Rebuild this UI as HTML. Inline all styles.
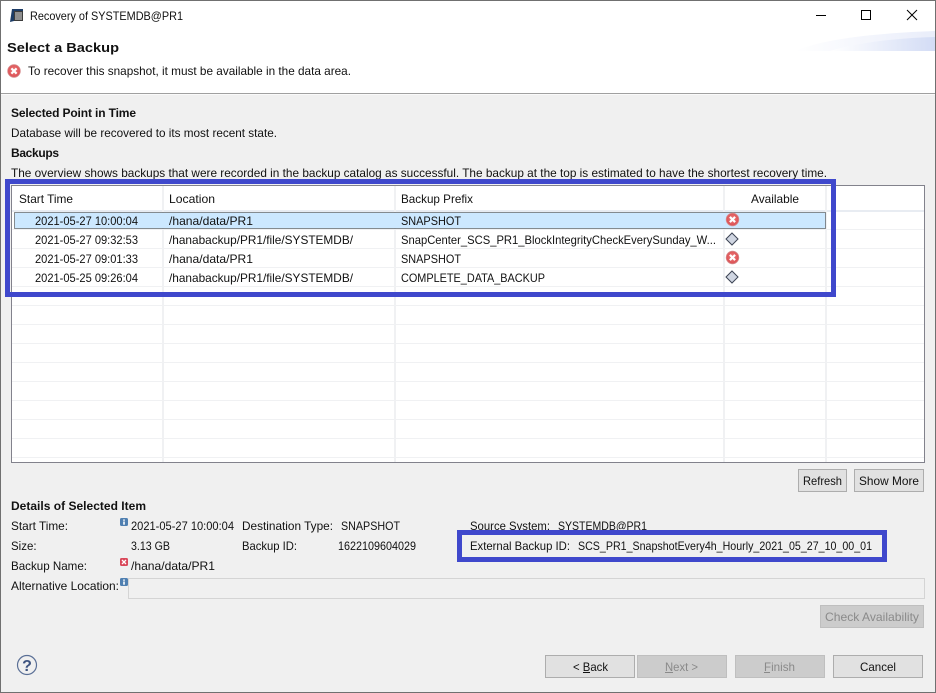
<!DOCTYPE html>
<html><head><meta charset="utf-8"><style>
html,body{margin:0;padding:0;background:#f0f0f0;width:936px;height:693px;overflow:hidden}
svg{display:block}
text{font-family:"Liberation Sans",sans-serif;font-size:12px;fill:#111}
.b{font-weight:bold}
.d{fill:#8a8a8a}
</style></head><body>
<svg width="936" height="693" viewBox="0 0 936 693" xmlns="http://www.w3.org/2000/svg">
<defs>
<linearGradient id="g1" x1="0" x2="1" y1="0" y2="0"><stop offset="0" stop-color="#fff"/><stop offset="1" stop-color="#d3dcf5"/></linearGradient>
<linearGradient id="g2" x1="0" x2="1" y1="0" y2="0"><stop offset="0" stop-color="#fff"/><stop offset="1" stop-color="#e9edfa"/></linearGradient>
<radialGradient id="er" cx=".5" cy=".45" r=".6"><stop offset="0" stop-color="#ee7a7a"/><stop offset="1" stop-color="#d84a4e"/></radialGradient>
<g id="err"><circle r="6.3" fill="url(#er)" stroke="#d6888a" stroke-width=".8"/><path d="M-2.6-2.6L2.6 2.6M2.6-2.6L-2.6 2.6" stroke="#fff" stroke-width="2.2"/></g>
<g id="dia"><path d="M0-6L6 0L0 6L-6 0Z" fill="#d0d6e2" stroke="#3c4454" stroke-width="1"/></g>
<g id="info"><rect x="-4" y="-4" width="8" height="8" rx="1.5" fill="#4f7fb0"/><rect x="-.8" y="-2.6" width="1.6" height="1.4" fill="#fff"/><rect x="-.8" y="-.5" width="1.6" height="3.2" fill="#fff"/></g>
<g id="xs"><rect x="-4" y="-4" width="8" height="8" rx="1.5" fill="#d9485a"/><path d="M-2-2L2 2M2-2L-2 2" stroke="#fff" stroke-width="1.3"/></g>
</defs>

<!-- backgrounds -->
<rect width="936" height="693" fill="#f0f0f0"/>
<rect x="0" y="0" width="936" height="93" fill="#fff"/>
<path d="M795 51C825 38 880 33 935 31V51Z" fill="url(#g2)"/>
<path d="M830 51C860 42 900 38 935 37V51Z" fill="url(#g1)"/>
<rect x="0" y="93" width="936" height="1" fill="#a0a0a0"/>
<rect x="0" y="94" width="936" height="1" fill="#fafafa"/>

<!-- title bar -->
<path d="M10 22L12 9H23V21H14Z" fill="#1d3c66"/>
<rect x="14.5" y="11.5" width="8" height="9" fill="#8f8f8f" stroke="#3c3c3c" stroke-width="1"/>
<text x="30" y="20" textLength="153" lengthAdjust="spacingAndGlyphs">Recovery of SYSTEMDB@PR1</text>
<rect x="816" y="15" width="10" height="1" fill="#000"/>
<rect x="861.5" y="10.5" width="9" height="9" fill="none" stroke="#000"/>
<path d="M907 10L917 20M917 10L907 20" stroke="#000" stroke-width="1" fill="none"/>

<text x="7" y="52" class="b" style="font-size:13px" textLength="112" lengthAdjust="spacingAndGlyphs">Select a Backup</text>
<use href="#err" x="14" y="71"/>
<text x="28" y="75" textLength="323" lengthAdjust="spacingAndGlyphs">To recover this snapshot, it must be available in the data area.</text>

<text x="11" y="117" class="b" textLength="125" lengthAdjust="spacing">Selected Point in Time</text>
<text x="11" y="137" textLength="266" lengthAdjust="spacingAndGlyphs">Database will be recovered to its most recent state.</text>
<text x="11" y="157" class="b" textLength="48" lengthAdjust="spacing">Backups</text>
<text x="11" y="177" textLength="816" lengthAdjust="spacingAndGlyphs">The overview shows backups that were recorded in the backup catalog as successful. The backup at the top is estimated to have the shortest recovery time.</text>

<!-- table -->
<rect x="11.5" y="185.5" width="913" height="277" fill="#fff" stroke="#82828c"/>
<g fill="#f0f1f3">
<rect x="12" y="229" width="912" height="1"/><rect x="12" y="248" width="912" height="1"/><rect x="12" y="267" width="912" height="1"/><rect x="12" y="286" width="912" height="1"/><rect x="12" y="305" width="912" height="1"/><rect x="12" y="324" width="912" height="1"/><rect x="12" y="343" width="912" height="1"/><rect x="12" y="362" width="912" height="1"/><rect x="12" y="381" width="912" height="1"/><rect x="12" y="400" width="912" height="1"/><rect x="12" y="419" width="912" height="1"/><rect x="12" y="438" width="912" height="1"/><rect x="12" y="457" width="912" height="1"/>
<rect x="12" y="210" width="912" height="2" fill="#e8ecf2"/>
<rect x="162" y="186" width="2" height="276"/><rect x="394" y="186" width="2" height="276"/><rect x="723" y="186" width="2" height="276"/><rect x="825" y="186" width="2" height="276"/>
</g>
<rect x="14.5" y="212.5" width="811" height="16" fill="#cce8ff" stroke="#222" stroke-dasharray="1 1"/>
<text x="19" y="203" textLength="54" lengthAdjust="spacingAndGlyphs">Start Time</text>
<text x="169" y="203" textLength="46" lengthAdjust="spacingAndGlyphs">Location</text>
<text x="401" y="203" textLength="72" lengthAdjust="spacingAndGlyphs">Backup Prefix</text>
<text x="751" y="203" textLength="48" lengthAdjust="spacingAndGlyphs">Available</text>

<text x="35" y="225" textLength="103" lengthAdjust="spacingAndGlyphs">2021-05-27 10:00:04</text>
<text x="169" y="225" textLength="84" lengthAdjust="spacingAndGlyphs">/hana/data/PR1</text>
<text x="401" y="225" textLength="60" lengthAdjust="spacingAndGlyphs">SNAPSHOT</text>
<use href="#err" x="732.5" y="219.5"/>
<text x="35" y="244" textLength="103" lengthAdjust="spacingAndGlyphs">2021-05-27 09:32:53</text>
<text x="169" y="244" textLength="184" lengthAdjust="spacingAndGlyphs">/hanabackup/PR1/file/SYSTEMDB/</text>
<text x="401" y="244" textLength="315" lengthAdjust="spacingAndGlyphs">SnapCenter_SCS_PR1_BlockIntegrityCheckEverySunday_W...</text>
<use href="#dia" x="732" y="239"/>
<text x="35" y="263" textLength="103" lengthAdjust="spacingAndGlyphs">2021-05-27 09:01:33</text>
<text x="169" y="263" textLength="84" lengthAdjust="spacingAndGlyphs">/hana/data/PR1</text>
<text x="401" y="263" textLength="60" lengthAdjust="spacingAndGlyphs">SNAPSHOT</text>
<use href="#err" x="732.5" y="257.5"/>
<text x="35" y="282" textLength="103" lengthAdjust="spacingAndGlyphs">2021-05-25 09:26:04</text>
<text x="169" y="282" textLength="184" lengthAdjust="spacingAndGlyphs">/hanabackup/PR1/file/SYSTEMDB/</text>
<text x="401" y="282" textLength="144" lengthAdjust="spacingAndGlyphs">COMPLETE_DATA_BACKUP</text>
<use href="#dia" x="732" y="277"/>

<!-- refresh / show more -->
<rect x="798.5" y="469.5" width="48" height="22" fill="#e1e1e1" stroke="#adadad"/>
<text x="803" y="485" textLength="39" lengthAdjust="spacingAndGlyphs">Refresh</text>
<rect x="854.5" y="469.5" width="69" height="22" fill="#e1e1e1" stroke="#adadad"/>
<text x="859" y="485" textLength="60" lengthAdjust="spacingAndGlyphs">Show More</text>

<!-- details -->
<text x="11" y="510" class="b" textLength="135" lengthAdjust="spacing">Details of Selected Item</text>
<text x="11" y="530" textLength="57" lengthAdjust="spacingAndGlyphs">Start Time:</text>
<use href="#info" x="124" y="522"/>
<text x="131" y="530" textLength="103" lengthAdjust="spacingAndGlyphs">2021-05-27 10:00:04</text>
<text x="242" y="530" textLength="91" lengthAdjust="spacingAndGlyphs">Destination Type:</text>
<text x="341" y="530" textLength="59" lengthAdjust="spacingAndGlyphs">SNAPSHOT</text>
<text x="470" y="530" textLength="80" lengthAdjust="spacingAndGlyphs">Source System:</text>
<text x="558" y="530" textLength="89" lengthAdjust="spacingAndGlyphs">SYSTEMDB@PR1</text>
<text x="11" y="550" style="font-size:11.5px">Size:</text>
<text x="131" y="550" textLength="39" lengthAdjust="spacingAndGlyphs">3.13 GB</text>
<text x="242" y="550" textLength="55" lengthAdjust="spacingAndGlyphs">Backup ID:</text>
<text x="338" y="550" textLength="78" lengthAdjust="spacingAndGlyphs">1622109604029</text>
<text x="470" y="550" textLength="100" lengthAdjust="spacingAndGlyphs">External Backup ID:</text>
<text x="578" y="550" textLength="294" lengthAdjust="spacingAndGlyphs">SCS_PR1_SnapshotEvery4h_Hourly_2021_05_27_10_00_01</text>
<text x="11" y="570" textLength="76" lengthAdjust="spacingAndGlyphs">Backup Name:</text>
<use href="#xs" x="124" y="562"/>
<text x="131" y="570" textLength="84" lengthAdjust="spacingAndGlyphs">/hana/data/PR1</text>
<text x="11" y="590" textLength="108" lengthAdjust="spacingAndGlyphs">Alternative Location:</text>
<use href="#info" x="124" y="582"/>
<rect x="128.5" y="578.5" width="796" height="20" fill="#f0f0f0" stroke="#d4d4d4"/>

<rect x="820.5" y="605.5" width="103" height="22" fill="#cccccc" stroke="#bfbfbf"/>
<text x="825" y="621" class="d" textLength="94" lengthAdjust="spacingAndGlyphs">Check Availability</text>

<!-- help -->
<circle cx="27" cy="665" r="9.5" fill="none" stroke="#5a6f96" stroke-width="1.2"/>
<text x="27" y="671" text-anchor="middle" class="b" style="font-size:16px;fill:#3e5480">?</text>

<!-- bottom buttons -->
<rect x="545.5" y="655.5" width="89" height="22" fill="#e1e1e1" stroke="#adadad"/>
<text x="573" y="671" textLength="35" lengthAdjust="spacingAndGlyphs">&lt; Back</text>
<rect x="583" y="672" width="7" height="1" fill="#111"/>
<rect x="637.5" y="655.5" width="89" height="22" fill="#cccccc" stroke="#bfbfbf"/>
<text x="665" y="671" class="d" textLength="33" lengthAdjust="spacingAndGlyphs">Next &gt;</text>
<rect x="665" y="672" width="8" height="1" fill="#8a8a8a"/>
<rect x="735.5" y="655.5" width="89" height="22" fill="#cccccc" stroke="#bfbfbf"/>
<text x="764" y="671" class="d" textLength="31" lengthAdjust="spacingAndGlyphs">Finish</text>
<rect x="764" y="672" width="6" height="1" fill="#8a8a8a"/>
<rect x="833.5" y="655.5" width="89" height="22" fill="#e1e1e1" stroke="#adadad"/>
<text x="860" y="671" textLength="36" lengthAdjust="spacingAndGlyphs">Cancel</text>

<!-- blue highlight frames -->
<rect x="7.5" y="181.5" width="826" height="113" fill="none" stroke="#3f48cc" stroke-width="5"/>
<rect x="459.5" y="532.5" width="425" height="27" fill="none" stroke="#3f48cc" stroke-width="5"/>

<!-- window border -->
<rect x="0" y="0" width="936" height="1" fill="#707070"/>
<rect x="0" y="0" width="1" height="693" fill="#707070"/>
<rect x="935" y="0" width="1" height="693" fill="#707070"/>
<rect x="0" y="692" width="936" height="1" fill="#707070"/>
</svg>
</body></html>
